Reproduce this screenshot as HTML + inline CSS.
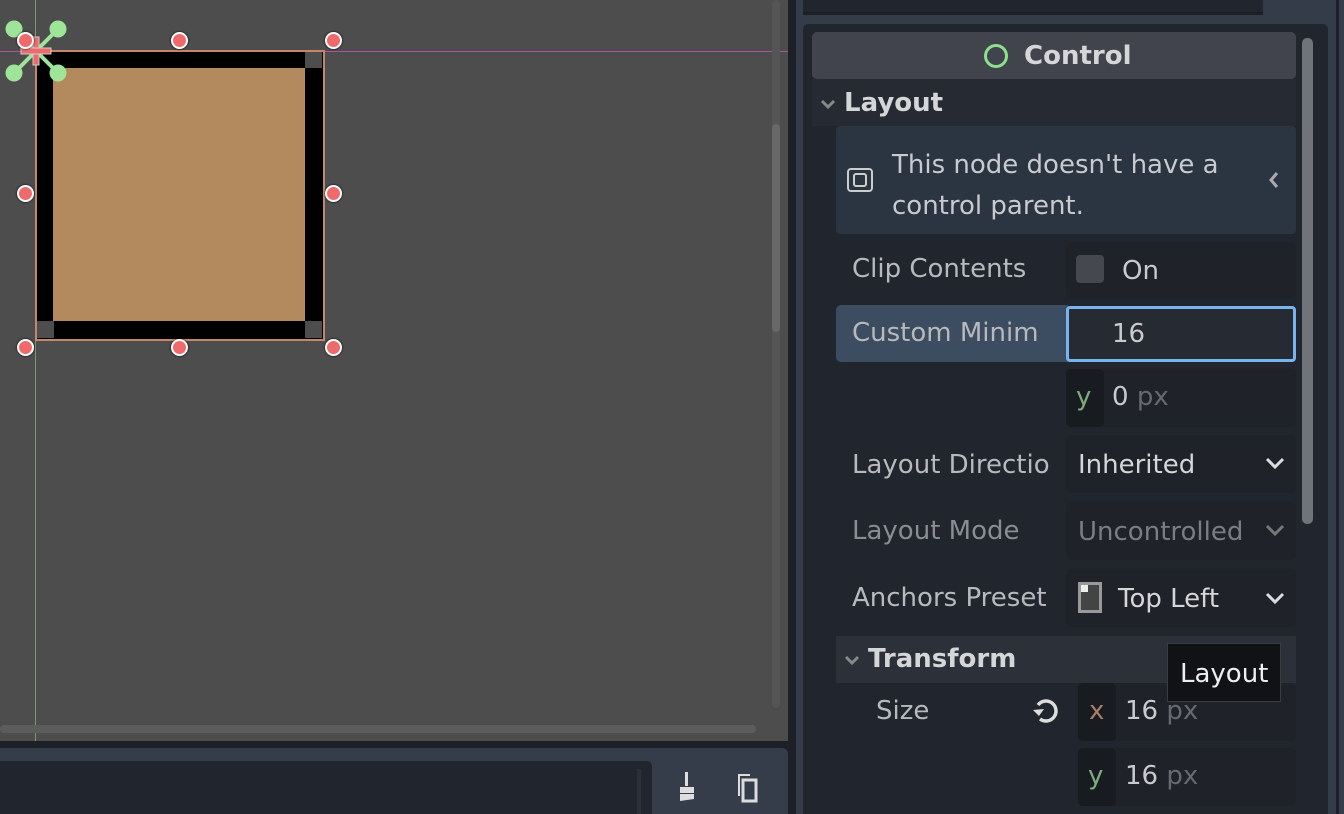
<!DOCTYPE html><html><head><style>
body{margin:0;width:1344px;height:814px;overflow:hidden;background:#353c49;font-family:"Liberation Sans",sans-serif;position:relative}
div{position:absolute;box-sizing:border-box}
.t{font-family:"DejaVu Sans","Liberation Sans",sans-serif;font-size:26px;color:#c8cacd;white-space:nowrap;line-height:30px}
.lab{color:#b7b9bd}
.val{background:#1f2229;border-radius:5px}
.h{width:17px;height:17px;border-radius:50%;background:#ef6b6b;border:2px solid #fff;box-shadow:0 0 2px #000}
</style></head><body>
<div style="left:0;top:0;width:788px;height:741px;background:#4d4d4d"></div>
<div style="left:35px;top:0;width:1px;height:741px;background:#7a9a6a"></div>
<div style="left:0;top:51px;width:788px;height:1px;background:#a8579e"></div>
<div style="left:772px;top:0;width:8px;height:708px;background:#555;border-radius:4px"></div>
<div style="left:772px;top:124px;width:8px;height:208px;background:#686868;border-radius:4px"></div>
<div style="left:0;top:725px;width:756px;height:8px;background:#5c5c5c;border-radius:4px"></div>
<div style="left:35px;top:50px;width:290px;height:291px;border:2px solid #c3876a"></div>
<div style="left:37px;top:52px;width:286px;height:287px;background:#000"></div>
<div style="left:53px;top:68px;width:252px;height:253px;background:#b3895e"></div>
<div style="left:305px;top:52px;width:17px;height:16px;background:#4d4d4d"></div>
<div style="left:37px;top:321px;width:17px;height:17px;background:#4d4d4d"></div>
<div style="left:305px;top:321px;width:17px;height:17px;background:#4d4d4d"></div>
<svg style="position:absolute;left:0;top:15px" width="72" height="72"><g stroke="#9ee59a" stroke-width="4"><line x1="14" y1="14" x2="36" y2="36"/><line x1="58" y1="14" x2="36" y2="36"/><line x1="14" y1="58" x2="36" y2="36"/><line x1="58" y1="58" x2="36" y2="36"/></g><g fill="#9ee59a"><circle cx="14" cy="14" r="8.5"/><circle cx="58" cy="14" r="8.5"/><circle cx="14" cy="58" r="8.5"/><circle cx="58" cy="58" r="8.5"/></g><rect x="33" y="22" width="6" height="28" fill="#ef6b6b" stroke="#ccc"/><rect x="21" y="33" width="30" height="6" fill="#ef6b6b" stroke="#ccc"/></svg>
<div class="h" style="left:17px;top:32px"></div><div class="h" style="left:171px;top:32px"></div><div class="h" style="left:325px;top:32px"></div>
<div class="h" style="left:17px;top:185px"></div><div class="h" style="left:325px;top:185px"></div>
<div class="h" style="left:17px;top:339px"></div><div class="h" style="left:171px;top:339px"></div><div class="h" style="left:325px;top:339px"></div>
<div style="left:0;top:741px;width:796px;height:73px;background:#1d2027"></div>
<div style="left:0;top:748px;width:788px;height:66px;background:#363d4a;border-radius:0 6px 0 0"></div>
<div style="left:0;top:761px;width:652px;height:53px;background:#21252d;border-radius:0 5px 0 0"></div>
<div style="left:637px;top:769px;width:4px;height:45px;background:#2c3038"></div>
<svg style="position:absolute;left:674px;top:772px" width="26" height="32"><rect x="11" y="0" width="3" height="14" fill="#ddd"/><path d="M6 15h14v6H6zM6 22h14v5L6 29z" fill="#ddd"/></svg>
<svg style="position:absolute;left:736px;top:772px" width="32" height="32"><path d="M2 2h12v2H4v20H2z" fill="#ddd"/><rect x="7" y="8" width="13" height="21" fill="none" stroke="#ddd" stroke-width="3"/></svg>
<div style="left:788px;top:0;width:8px;height:814px;background:#1d2027"></div>
<div style="left:1336px;top:0;width:3px;height:814px;background:#1d2027"></div>
<div style="left:803px;top:0;width:460px;height:15px;background:#21252d;border-bottom:3px solid #1c1f26"></div>
<div style="left:803px;top:24px;width:525px;height:790px;background:#21252d;border-radius:5px 5px 0 0"></div>
<div style="left:1302px;top:38px;width:11px;height:486px;background:#70737a;border-radius:5px"></div>
<div style="left:812px;top:32px;width:484px;height:47px;background:#41444d;border-radius:5px"></div>
<div style="left:984px;top:44px;width:24px;height:24px;border:3px solid #8fe08c;border-radius:50%"></div>
<div class="t" style="left:1024px;top:41px;font-weight:bold;font-size:26px;color:#d5d6d8">Control</div>
<div style="left:812px;top:79px;width:484px;height:47px;background:#262a32"></div>
<svg style="position:absolute;left:820px;top:98px" width="16" height="12"><path d="M2 3l6 6 6-6" stroke="#888" stroke-width="3" fill="none"/></svg>
<div class="t" style="left:844px;top:88px;font-weight:bold;font-size:26px;color:#d5d6d8">Layout</div>
<div style="left:836px;top:126px;width:460px;height:108px;background:#2b3441;border-radius:4px"></div>
<div style="left:847px;top:168px;width:26px;height:24px;border:2px solid #ccc;border-radius:4px"></div>
<div style="left:853px;top:173px;width:14px;height:14px;border:2px solid #ccc;border-radius:3px"></div>
<div class="t" style="left:892px;top:145px;line-height:41px">This node doesn't have a<br>control parent.</div>
<svg style="position:absolute;left:1268px;top:171px" width="12" height="18"><path d="M9 2L3 9l6 7" stroke="#aaa" stroke-width="3" fill="none"/></svg>
<div class="t lab" style="left:852px;top:254px">Clip Contents</div>
<div class="val" style="left:1066px;top:242px;width:230px;height:56px"></div>
<div style="left:1076px;top:255px;width:28px;height:28px;background:#45484f;border-radius:4px"></div>
<div class="t" style="left:1122px;top:256px">On</div>
<div style="left:836px;top:305px;width:232px;height:57px;background:#3c4d61;border-radius:5px 0 0 5px"></div>
<div class="t lab" style="left:852px;top:318px">Custom Minim</div>
<div style="left:1066px;top:306px;width:230px;height:56px;background:#262a32;border:3px solid #78b4f0;border-radius:4px"></div>
<div class="t" style="left:1112px;top:319px">16</div>
<div class="val" style="left:1066px;top:369px;width:230px;height:58px"></div>
<div style="left:1066px;top:369px;width:38px;height:58px;background:#181b20;border-radius:5px"></div>
<div class="t" style="left:1076px;top:382px;color:#7eaa7e">y</div>
<div class="t" style="left:1112px;top:382px">0 <span style="color:#666a70">px</span></div>
<div class="t lab" style="left:852px;top:450px">Layout Directio</div>
<div class="val" style="left:1066px;top:435px;width:230px;height:58px"></div>
<div class="t" style="left:1078px;top:450px;color:#d5d6d8">Inherited</div>
<svg style="position:absolute;left:1264px;top:455px" width="22" height="16"><path d="M3 4l8 8 8-8" stroke="#ddd" stroke-width="3" fill="none"/></svg>
<div class="t lab" style="left:852px;top:516px;color:#8a8c91">Layout Mode</div>
<div class="val" style="left:1066px;top:502px;width:230px;height:58px"></div>
<div class="t" style="left:1078px;top:517px;color:#7a7d82">Uncontrolled</div>
<svg style="position:absolute;left:1264px;top:522px" width="22" height="16"><path d="M3 4l8 8 8-8" stroke="#777" stroke-width="3" fill="none"/></svg>
<div class="t lab" style="left:852px;top:583px">Anchors Preset</div>
<div class="val" style="left:1066px;top:569px;width:230px;height:58px"></div>
<div style="left:1078px;top:582px;width:24px;height:31px;background:#444;border:3px solid #999"></div>
<div style="left:1081px;top:585px;width:7px;height:7px;background:#eee"></div>
<div class="t" style="left:1118px;top:584px;color:#d5d6d8">Top Left</div>
<svg style="position:absolute;left:1264px;top:590px" width="22" height="16"><path d="M3 4l8 8 8-8" stroke="#ddd" stroke-width="3" fill="none"/></svg>
<div style="left:836px;top:636px;width:460px;height:47px;background:#2c3039"></div>
<svg style="position:absolute;left:844px;top:654px" width="16" height="12"><path d="M2 3l6 6 6-6" stroke="#888" stroke-width="3" fill="none"/></svg>
<div class="t" style="left:868px;top:644px;font-weight:bold;font-size:26px;color:#d5d6d8">Transform</div>
<div class="t lab" style="left:876px;top:696px">Size</div>
<svg style="position:absolute;left:1030px;top:697px" width="30" height="30"><path d="M8 8A10 10 0 1 1 10 22" stroke="#ddd" stroke-width="3.5" fill="none"/><path d="M3 13l6 6 5-7z" fill="#ddd"/></svg>
<div class="val" style="left:1078px;top:683px;width:218px;height:58px"></div>
<div style="left:1078px;top:683px;width:38px;height:58px;background:#181b20;border-radius:5px"></div>
<div class="t" style="left:1089px;top:696px;color:#a97d6c">x</div>
<div class="t" style="left:1125px;top:696px">16 <span style="color:#666a70">px</span></div>
<div class="val" style="left:1078px;top:748px;width:218px;height:58px"></div>
<div style="left:1078px;top:748px;width:38px;height:58px;background:#181b20;border-radius:5px"></div>
<div class="t" style="left:1088px;top:761px;color:#7eaa7e">y</div>
<div class="t" style="left:1125px;top:761px">16 <span style="color:#666a70">px</span></div>
<div style="left:1167px;top:643px;width:114px;height:59px;background:#111216;border:1px solid #3a3c40"></div>
<div class="t" style="left:1180px;top:659px;color:#eee">Layout</div>
</body></html>
